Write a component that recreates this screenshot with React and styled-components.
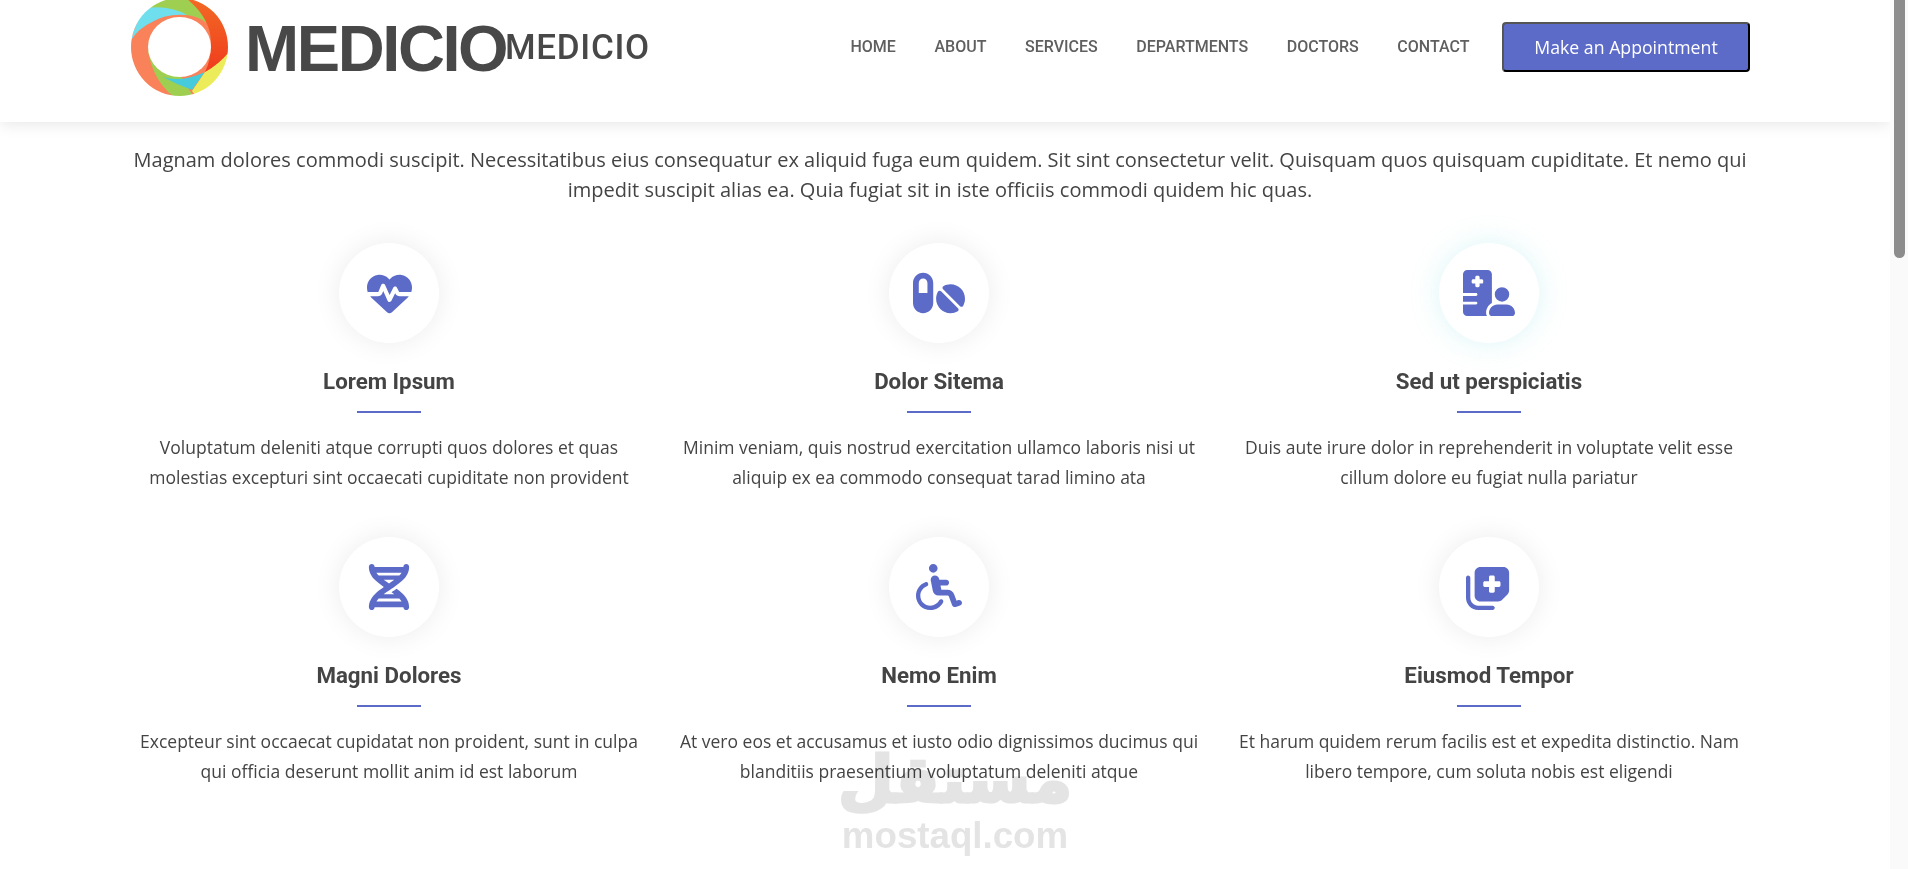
import React from "react";
import { styled, createGlobalStyle } from "styled-components";
import {
  FaHeartPulse,
  FaPills,
  FaHospitalUser,
  FaDna,
  FaWheelchair,
  FaNotesMedical,
} from "react-icons/fa6";

const accent = "#5c6bc8";

const services = [
  {
    icon: <FaHeartPulse />,
    size: 45,
    title: "Lorem Ipsum",
    text: ["Voluptatum deleniti atque corrupti quos dolores et quas", "molestias excepturi sint occaecati cupiditate non provident"],
  },
  {
    icon: <FaPills />,
    size: 52,
    title: "Dolor Sitema",
    text: ["Minim veniam, quis nostrud exercitation ullamco laboris nisi ut", "aliquip ex ea commodo consequat tarad limino ata"],
  },
  {
    icon: <FaHospitalUser />,
    size: 52,
    title: "Sed ut perspiciatis",
    glow: true,
    text: ["Duis aute irure dolor in reprehenderit in voluptate velit esse", "cillum dolore eu fugiat nulla pariatur"],
  },
  {
    icon: <FaDna />,
    size: 46,
    title: "Magni Dolores",
    text: ["Excepteur sint occaecat cupidatat non proident, sunt in culpa", "qui officia deserunt mollit anim id est laborum"],
  },
  {
    icon: <FaWheelchair />,
    size: 46,
    title: "Nemo Enim",
    text: ["At vero eos et accusamus et iusto odio dignissimos ducimus qui", "blanditiis praesentium voluptatum deleniti atque"],
  },
  {
    icon: <FaNotesMedical />,
    size: 46,
    title: "Eiusmod Tempor",
    text: ["Et harum quidem rerum facilis est et expedita distinctio. Nam", "libero tempore, cum soluta nobis est eligendi"],
  },
];

const links = ["HOME", "ABOUT", "SERVICES", "DEPARTMENTS", "DOCTORS", "CONTACT"];

const LogoRing = () => (
  <RingSvg viewBox="0 2 97 96">
    <defs>
      <linearGradient id="red" x1="0" y1="0" x2="0" y2="1">
        <stop offset="0" stopColor="#f26a24" />
        <stop offset="1" stopColor="#f03c1e" />
      </linearGradient>
      <mask id="ring">
        <ellipse cx="48.5" cy="49" rx="48.5" ry="49" fill="#fff" />
        <ellipse cx="48.5" cy="49" rx="31.5" ry="30" fill="#000" />
      </mask>
    </defs>
    <g mask="url(#ring)">
      <rect x="0" y="0" width="97" height="98" fill="#f9825a" />
      <path d="M16.8 52 Q22 82 41.7 98 L62 98 L50 78 Z" fill="#9fcf50" />
      <path d="M32 79 Q50 85 74 74 L61 92 Q45 86 32 79 Z" fill="#45cbdc" />
      <path d="M97 55 Q88 66 74 74 L61 93 L66 100 L100 100 L100 55 Z" fill="#ecec5a" />
      <path d="M19 0 L55 0 Q70 12 77 26 Q68 18 55 17 Q35 8 15 11 Z" fill="#9fcf50" />
      <path d="M55 0 Q80 20 80 45 Q80 62 74 74 Q88 66 97 55 L100 0 Z" fill="url(#red)" />
      <path d="M0 42 Q8 15 16 10 Q38 7 56 17 Q36 15 21 24 Q8 30 0 42 Z" fill="#6fdfee" />
    </g>
  </RingSvg>
);

export default function App() {
  return (
    <Page>
      <GlobalStyle />
      <Header>
        <Brand>
          <LogoRing />
          <LogoWord>MEDICIO</LogoWord>
          <SiteName>MEDICIO</SiteName>
        </Brand>
        <Nav>
          {links.map((link) => (
            <NavLink key={link}>{link}</NavLink>
          ))}
          <AppointmentButton>Make an Appointment</AppointmentButton>
        </Nav>
      </Header>

      <Main>
        <Intro>
          Magnam dolores commodi suscipit. Necessitatibus eius consequatur ex aliquid fuga eum quidem. Sit sint consectetur velit. Quisquam quos quisquam cupiditate. Et nemo qui
          <br />
          impedit suscipit alias ea. Quia fugiat sit in iste officiis commodi quidem hic quas.
        </Intro>
        <Grid>
          {services.map((s) => (
            <Card key={s.title}>
              <IconCircle $glow={s.glow} $size={s.size}>{s.icon}</IconCircle>
              <CardTitle>{s.title}</CardTitle>
              <Rule />
              <CardText>
                {s.text[0]}
                <br />
                {s.text[1]}
              </CardText>
            </Card>
          ))}
        </Grid>
      </Main>

      <Watermark>
        <WatermarkArabic>مستقل</WatermarkArabic>
        <WatermarkLatin>mostaql.com</WatermarkLatin>
      </Watermark>

      <ScrollTrack>
        <ScrollThumb />
      </ScrollTrack>
    </Page>
  );
}

const GlobalStyle = createGlobalStyle`
  html, body {
    margin: 0;
    height: 869px;
    overflow: hidden;
    background: #fff;
  }
  * { box-sizing: border-box; }
`;

const Page = styled.div`
  position: relative;
  width: 1908px;
  height: 869px;
  overflow: hidden;
  font-family: "Open Sans", sans-serif;
  color: #444;
`;

const Header = styled.header`
  width: 1890px;
  height: 122px;
  padding: 0 140px 0 131px;
  display: flex;
  justify-content: space-between;
  background: #fff;
  box-shadow: 0 2px 15px rgba(0, 0, 0, 0.1);
`;

const Brand = styled.div`
  display: flex;
  align-items: flex-start;
`;

const RingSvg = styled.svg`
  width: 97px;
  height: 96px;
  margin-right: 17px;
`;

const LogoWord = styled.div`
  width: 260px;
  margin-top: 12px;
  font-family: "Liberation Sans", sans-serif;
  font-weight: 700;
  font-size: 65px;
  line-height: 74px;
  letter-spacing: -2.4px;
  color: #484848;
  white-space: nowrap;
`;

const SiteName = styled.div`
  margin-top: 27px;
  font-family: Roboto, sans-serif;
  font-weight: 500;
  font-size: 35px;
  line-height: 42px;
  letter-spacing: 0.7px;
  color: #484848;
`;

const Nav = styled.nav`
  display: flex;
  align-items: flex-start;
  gap: 38.6px;
`;

const NavLink = styled.a`
  margin-top: 36px;
  font-family: Roboto, sans-serif;
  font-weight: 500;
  font-size: 16px;
  line-height: 22px;
  color: #5f5f5f;
`;

const AppointmentButton = styled.button`
  width: 248px;
  height: 50px;
  margin: 22px 0 0 -6px;
  background: ${accent};
  color: #fff;
  border: 2px outset #000;
  border-top-color: #555;
  border-left-color: #555;
  border-radius: 4px;
  font-family: "Open Sans", sans-serif;
  font-size: 17.7px;
`;

const Main = styled.main`
  width: 1650px;
  margin-left: 114px;
`;

const Intro = styled.p`
  margin: 23px 0 38px;
  padding-left: 2px;
  font-size: 20px;
  line-height: 30px;
  text-align: center;
  color: #444;
  white-space: nowrap;
`;

const Grid = styled.div`
  display: grid;
  grid-template-columns: repeat(3, 550px);
  row-gap: 45px;
`;

const Card = styled.article`
  display: flex;
  flex-direction: column;
  align-items: center;
  text-align: center;
`;

const IconCircle = styled.div`
  width: 100px;
  height: 100px;
  border-radius: 50%;
  display: flex;
  align-items: center;
  justify-content: center;
  background: #fff;
  color: ${accent};
  font-size: ${(p) => p.$size}px;
  box-shadow: ${(p) =>
    p.$glow ? "0 0 28px rgba(120, 220, 225, 0.25)" : "0 0 28px rgba(0, 0, 0, 0.08)"};
`;

const CardTitle = styled.h3`
  margin: 24px 0 0;
  font-family: Roboto, sans-serif;
  font-weight: 700;
  font-size: 22.3px;
  line-height: 28px;
  color: #444;
`;

const Rule = styled.div`
  width: 64px;
  height: 2px;
  margin-top: 16px;
  background: ${accent};
`;

const CardText = styled.p`
  margin: 19px 0 0;
  font-size: 17.5px;
  line-height: 30px;
  color: #444;
`;

const Watermark = styled.div`
  position: absolute;
  left: 842px;
  top: 738px;
  width: 226px;
  display: flex;
  flex-direction: column;
  align-items: center;
  mix-blend-mode: multiply;
  pointer-events: none;
`;

const WatermarkArabic = styled.div`
  height: 80px;
  font-family: "DejaVu Sans", sans-serif;
  font-weight: 700;
  font-size: 64px;
  line-height: 84px;
  color: #e4e4e4;
  -webkit-text-stroke: 3px #e4e4e4;
`;

const WatermarkLatin = styled.div`
  font-family: "Liberation Sans", sans-serif;
  font-weight: 700;
  font-size: 36.7px;
  line-height: 36px;
  color: #e4e4e4;
`;

const ScrollTrack = styled.div`
  position: fixed;
  top: 0;
  right: 0;
  width: 18px;
  height: 869px;
  padding-left: 4px;
  background: #fafafa;
`;

const ScrollThumb = styled.div`
  width: 11px;
  height: 258px;
  border-radius: 0 0 6px 6px;
  background: #8c8c8c;
`;
